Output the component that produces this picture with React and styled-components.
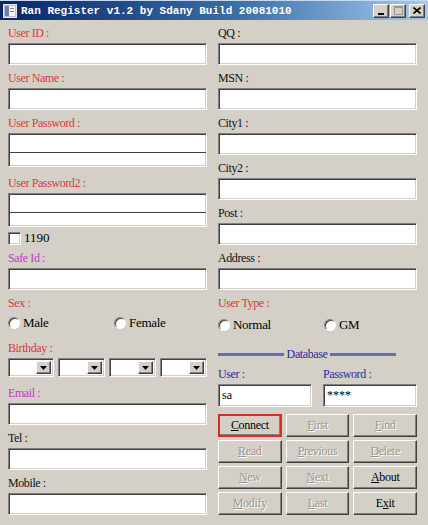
import React from "react";
import styled, { createGlobalStyle } from "styled-components";

const GlobalStyle = createGlobalStyle`
  html, body {
    margin: 0;
    padding: 0;
    background: #d4d0c8;
  }
  * {
    box-sizing: border-box;
  }
`;

const Window = styled.div`
  width: 428px;
  height: 525px;
  background: #d4d0c8;
  font-family: "Liberation Serif", "Times New Roman", serif;
  font-size: 12px;
  color: #000;
  overflow: hidden;
`;

const TitleBar = styled.div`
  height: 20px;
  display: flex;
  align-items: center;
  padding: 0 3px;
  background: linear-gradient(to right, #0a246a 0%, #3a6ea5 55%, #a6caf0 100%);
  border-top: 1px solid #c8d8ee;
`;

const TitleIcon = styled.div`
  width: 14px;
  height: 14px;
  margin-right: 4px;
  display: flex;
`;

const TitleText = styled.div`
  flex: 1;
  color: #fff;
  font-family: "Liberation Mono", "Courier New", monospace;
  font-weight: bold;
  font-size: 11px;
  white-space: nowrap;
`;

const CaptionButtons = styled.div`
  display: flex;
  gap: 1px;
`;

const CaptionButton = styled.div`
  width: 16px;
  height: 14px;
  background: #d4d0c8;
  border: 1px solid;
  border-color: #fff #404040 #404040 #fff;
  box-shadow: inset -1px -1px #808080;
  display: flex;
  align-items: center;
  justify-content: center;
  margin-left: ${(p) => (p.$gap ? "2px" : "0")};
`;

const Body = styled.div`
  display: grid;
  grid-template-columns: 199px 199px;
  column-gap: 11px;
  padding: 3px 11px 0 8px;
`;

const Column = styled.div`
  display: flex;
  flex-direction: column;
`;

const Field = styled.div`
  display: flex;
  flex-direction: column;
  margin-bottom: ${(p) => p.$mb ?? 3}px;
`;

const tones = {
  red: "#d83a3a",
  pink: "#c437c8",
  blue: "#2a2a9c",
  black: "#111",
};

const Label = styled.div`
  height: ${(p) => p.$h ?? 20}px;
  line-height: ${(p) => p.$h ?? 20}px;
  color: ${(p) => tones[p.$tone || "black"]};
  letter-spacing: -0.4px;
  white-space: nowrap;
`;

const sunken = `
  background: #fff;
  border: 1px solid;
  border-color: #808080 #fff #fff #808080;
  box-shadow: inset 1px 1px #404040, inset -1px -1px #d4d0c8;
`;

const TextBox = styled.input`
  ${sunken}
  display: block;
  width: 100%;
  height: ${(p) => p.$h ?? 22}px;
  margin: 0;
  padding: 0 3px;
  font-family: "Liberation Serif", "Times New Roman", serif;
  font-size: 12px;
  color: #000;
  outline: none;
`;

const DoubleBox = styled.div`
  ${sunken}
  height: 34px;
  display: flex;
  flex-direction: column;
`;

const DoublePart = styled.div`
  flex: ${(p) => p.$grow};
  border-bottom: ${(p) => (p.$split ? "1px solid #404040" : "none")};
`;

const CheckRow = styled.label`
  height: 18px;
  display: flex;
  align-items: center;
  gap: 3px;
  margin-bottom: 1px;
  font-size: 13px;
`;

const CheckBox = styled.span`
  ${sunken}
  width: 13px;
  height: 13px;
`;

const RadioRow = styled.div`
  height: ${(p) => p.$h ?? 20}px;
  display: grid;
  grid-template-columns: 106px auto;
  align-items: center;
  margin-top: ${(p) => p.$mt ?? 0}px;
  margin-bottom: ${(p) => p.$mb ?? 0}px;
`;

const RadioOption = styled.label`
  display: flex;
  align-items: center;
  gap: 3px;
  font-size: 13px;
  letter-spacing: -0.3px;
`;

const RadioDot = styled.span`
  width: 12px;
  height: 12px;
  border-radius: 50%;
  background: #fff;
  border: 1px solid;
  border-color: #808080 #fff #fff #808080;
  box-shadow: inset 1px 1px #404040;
`;

const ComboRow = styled.div`
  display: grid;
  grid-template-columns: 46px 47px 47px 47px;
  column-gap: 3px;
  justify-content: space-between;
  margin-bottom: 6px;
`;

const Combo = styled.div`
  ${sunken}
  height: 19px;
  display: flex;
  justify-content: flex-end;
  padding: 2px;
`;

const ComboArrow = styled.div`
  width: 15px;
  height: 100%;
  background: #d4d0c8;
  border: 1px solid;
  border-color: #fff #404040 #404040 #fff;
  box-shadow: inset -1px -1px #808080;
  display: flex;
  align-items: center;
  justify-content: center;
`;

const DbDivider = styled.div`
  height: 20px;
  display: flex;
  align-items: center;
  gap: 3px;
  width: 178px;
  margin-top: 8px;
  color: ${tones.blue};
  letter-spacing: -0.4px;
`;

const DbLine = styled.div`
  flex: 1;
  height: 3px;
  background: #6a6ab6;
`;

const LoginGrid = styled.div`
  display: grid;
  grid-template-columns: 94px 94px;
  column-gap: 11px;
  margin-bottom: 7px;
`;

const ButtonGrid = styled.div`
  display: grid;
  grid-template-columns: repeat(3, 1fr);
  column-gap: 4px;
  row-gap: 3px;
`;

const Button = styled.div`
  height: 23px;
  background: #d4d0c8;
  display: flex;
  align-items: center;
  justify-content: center;
  font-size: 12px;
  letter-spacing: -0.3px;
  color: ${(p) => (p.$disabled ? "#9a968e" : "#000")};
  text-shadow: ${(p) => (p.$disabled ? "1px 1px #fff" : "none")};
  border: ${(p) => (p.$focused ? "2px solid #e02a2a" : "1px solid")};
  border-color: ${(p) => (p.$focused ? "#e02a2a" : "#fff #404040 #404040 #fff")};
  box-shadow: inset -1px -1px #808080;

  u {
    text-decoration: underline;
    text-underline-offset: 1px;
  }
`;

const Arrow = () => (
  <svg width="7" height="4" viewBox="0 0 7 4">
    <path d="M0 0h7L3.5 4z" fill="#000" />
  </svg>
);

function Input({ label, tone, value }) {
  return (
    <Field>
      <Label $tone={tone}>{label}</Label>
      <TextBox readOnly defaultValue={value || ""} />
    </Field>
  );
}

function PasswordInput({ label, mb }) {
  return (
    <Field $mb={mb}>
      <Label $tone="red">{label}</Label>
      <DoubleBox>
        <DoublePart $grow={19} $split />
        <DoublePart $grow={14} />
      </DoubleBox>
    </Field>
  );
}

const buttons = [
  { text: "Connect", key: "C", focused: true },
  { text: "First", key: "F", disabled: true },
  { text: "Find", key: "F", disabled: true },
  { text: "Read", key: "R", disabled: true },
  { text: "Previous", key: "P", disabled: true },
  { text: "Delete", key: "D", disabled: true },
  { text: "New", key: "N", disabled: true },
  { text: "Next", key: "N", disabled: true },
  { text: "About", key: "A" },
  { text: "Modify", key: "M", disabled: true },
  { text: "Last", key: "L", disabled: true },
  { text: "Exit", key: "x", at: 1 },
];

function ButtonLabel({ text, at = 0 }) {
  return (
    <span>
      {text.slice(0, at)}
      <u>{text[at]}</u>
      {text.slice(at + 1)}
    </span>
  );
}

export default function App() {
  return (
    <Window>
      <GlobalStyle />
      <TitleBar>
        <TitleIcon>
          <svg width="14" height="14" viewBox="0 0 14 14">
            <rect x="0.5" y="0.5" width="13" height="13" fill="#c0c0c0" stroke="#e8e8e8" />
            <rect x="2" y="2" width="10" height="10" fill="#f4f4f4" />
            <rect x="2" y="2" width="4" height="10" fill="#6d7fa8" />
            <rect x="7" y="4" width="4" height="1" fill="#888" />
            <rect x="7" y="7" width="4" height="1" fill="#888" />
          </svg>
        </TitleIcon>
        <TitleText>Ran Register v1.2 by Sdany Build 20081010</TitleText>
        <CaptionButtons>
          <CaptionButton>
            <svg width="8" height="8" viewBox="0 0 8 8">
              <rect x="1" y="6" width="6" height="2" fill="#000" />
            </svg>
          </CaptionButton>
          <CaptionButton>
            <svg width="9" height="9" viewBox="0 0 9 9">
              <rect x="0.5" y="0.5" width="8" height="8" fill="none" stroke="#9a968e" />
              <rect x="0" y="0" width="9" height="2" fill="#9a968e" />
            </svg>
          </CaptionButton>
          <CaptionButton $gap>
            <svg width="8" height="7" viewBox="0 0 8 7">
              <path d="M0.5 0.5l7 6M7.5 0.5l-7 6" stroke="#000" strokeWidth="1.6" />
            </svg>
          </CaptionButton>
        </CaptionButtons>
      </TitleBar>

      <Body>
        <Column>
          <Input label="User ID :" tone="red" />
          <Input label="User Name :" tone="red" />
          <PasswordInput label="User Password :" mb={6} />
          <PasswordInput label="User Password2 :" mb={2} />
          <CheckRow>
            <CheckBox />
            1190
          </CheckRow>
          <Input label="Safe Id :" tone="pink" />
          <Label $tone="red">Sex :</Label>
          <RadioRow $mb={5}>
            <RadioOption>
              <RadioDot />
              Male
            </RadioOption>
            <RadioOption>
              <RadioDot />
              Female
            </RadioOption>
          </RadioRow>
          <Label $tone="red">Birthday :</Label>
          <ComboRow>
            {[0, 1, 2, 3].map((i) => (
              <Combo key={i}>
                <ComboArrow>
                  <Arrow />
                </ComboArrow>
              </Combo>
            ))}
          </ComboRow>
          <Input label="Email :" tone="pink" />
          <Input label="Tel :" />
          <Input label="Mobile :" />
        </Column>

        <Column>
          <Input label="QQ :" />
          <Input label="MSN :" />
          <Input label="City1 :" />
          <Input label="City2 :" />
          <Input label="Post :" />
          <Input label="Address :" />
          <Label $tone="red">User Type :</Label>
          <RadioRow $h={22} $mt={1}>
            <RadioOption>
              <RadioDot />
              Normal
            </RadioOption>
            <RadioOption>
              <RadioDot />
              GM
            </RadioOption>
          </RadioRow>
          <DbDivider>
            <DbLine />
            Database
            <DbLine />
          </DbDivider>
          <LoginGrid>
            <div>
              <Label $tone="blue" $h={20}>User :</Label>
              <TextBox readOnly defaultValue="sa" $h={23} />
            </div>
            <div>
              <Label $tone="blue" $h={20}>Password :</Label>
              <TextBox readOnly defaultValue="****" $h={23} />
            </div>
          </LoginGrid>
          <ButtonGrid>
            {buttons.map((b) => (
              <Button key={b.text} $disabled={b.disabled} $focused={b.focused}>
                <ButtonLabel text={b.text} at={b.at} />
              </Button>
            ))}
          </ButtonGrid>
        </Column>
      </Body>
    </Window>
  );
}
